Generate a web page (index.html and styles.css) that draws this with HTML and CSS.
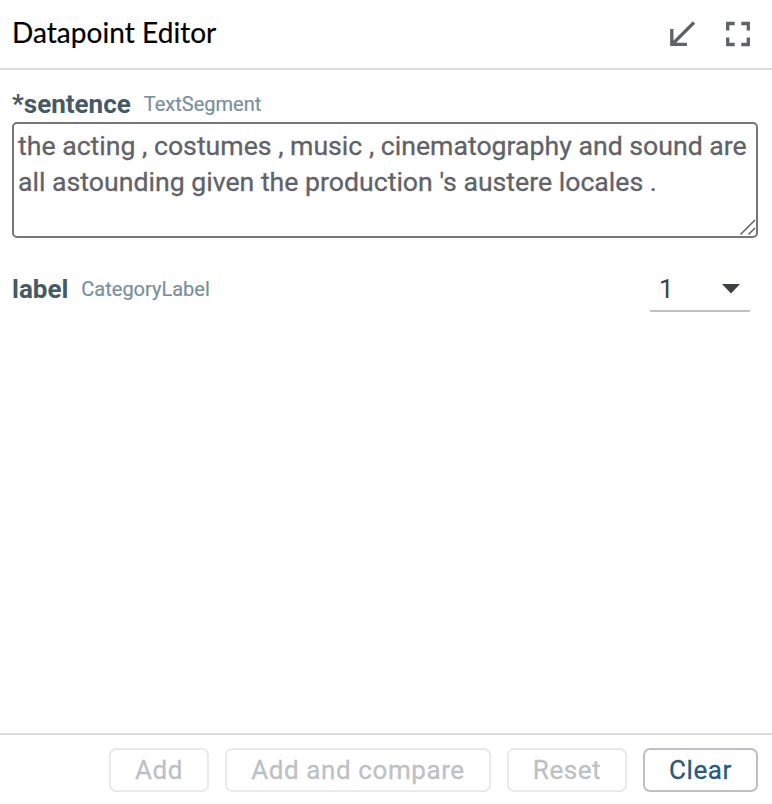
FILE: index.html
```html
<!DOCTYPE html>
<html lang="en">
<head>
<meta charset="utf-8">
<title>Datapoint Editor</title>
<link rel="stylesheet" href="styles.css">
</head>
<body>
<main class="panel">
  <header class="header">
    <h1 class="title">Datapoint Editor</h1>
    <div class="tools">
      <svg class="icon" viewBox="0 0 32 32"><path d="M28 5.500 6.500 27M5.800 12V27.300H21" fill="none" stroke="currentColor" stroke-width="3.300"/></svg>
      <svg class="icon" viewBox="0 0 32 32"><path d="M12.700 6.500H5.700V13.500M19.300 6.500h7V13.500M5.700 20.500v7H12.700M26.300 20.500v7H19.300" fill="none" stroke="currentColor" stroke-width="3.300"/></svg>
    </div>
  </header>
  <section class="content">
    <div class="field-name"><span class="name">*sentence</span><span class="type">TextSegment</span></div>
    <div class="text-wrap">
      <textarea class="text" spellcheck="false">the acting , costumes , music , cinematography and sound are all astounding given the production 's austere locales .</textarea>
      <svg class="grip" viewBox="0 0 16 16"><path d="M.5 15.500 15 1M8.500 15.500 15 9" fill="none" stroke="#555" stroke-width="1.400"/></svg>
    </div>
    <div class="row">
      <div class="field-name label-name"><span class="name">label</span><span class="type">CategoryLabel</span></div>
      <div class="select"><span>1</span><svg class="arrow" viewBox="0 0 18 10"><path d="M0 0H18L9 9.500Z" fill="currentColor"/></svg></div>
    </div>
  </section>
  <footer class="footer">
    <button class="button add" disabled>Add</button>
    <button class="button compare" disabled>Add and compare</button>
    <button class="button reset" disabled>Reset</button>
    <button class="button clear">Clear</button>
  </footer>
</main>
</body>
</html>
```
FILE: styles.css
```css
* { box-sizing: border-box; }
body { margin: 0; background: #fff; font-family: Roboto, sans-serif; }
.panel { height: 804px; display: flex; flex-direction: column; }
.header { height: 70px; padding: 0 18px 2px 12px; border-bottom: 2px solid #dadce0; display: flex; align-items: center; justify-content: space-between; }
.title { margin: 0; padding-bottom: 2px; font: 400 28px/34px Lato, sans-serif; letter-spacing: .05px; color: #000; -webkit-text-stroke: .2px #000; }
.tools { display: flex; gap: 24px; color: #5f6368; }
.icon { width: 32px; height: 32px; }
.content { flex: 1; padding: 17px 14px 0 12px; }
.field-name { height: 34px; display: flex; align-items: center; gap: 13px; }
.name { font-size: 26px; font-weight: 700; color: #455a64; }
.type { font-size: 20px; color: #78909c; -webkit-text-stroke: .2px; }
.text-wrap { position: relative; margin-top: 1px; }
.text { display: block; width: 746px; height: 116px; padding: 4px; border: 2px solid #767676; border-radius: 5px; font: 26.660px/36px Roboto, sans-serif; color: #5f6368; -webkit-text-stroke: .3px; resize: none; overflow: hidden; }
.grip { position: absolute; right: 2px; bottom: 3px; width: 16px; height: 16px; }
.row { display: flex; justify-content: space-between; margin-top: 30px; padding-right: 8px; }
.label-name { margin-top: 4px; }
.select { width: 100px; height: 44px; padding: 0 10px 0 9px; display: flex; align-items: center; justify-content: space-between; border-bottom: 2px solid #bdc1c6; font-size: 26px; color: #3c4043; }
.arrow { width: 18px; height: 10px; }
.footer { height: 71px; padding: 0 14px 0 0; border-top: 2px solid #dadce0; display: flex; align-items: center; justify-content: flex-end; gap: 16px; }
.button { height: 44px; padding: 0; border: 2px solid #e8eaed; border-radius: 7px; background: #fff; color: #bdc1c6; font: 26px Roboto, sans-serif; letter-spacing: .58px; -webkit-text-stroke: .3px; }
.add { width: 100px; }
.compare { width: 266px; }
.reset { width: 120px; }
.clear { width: 115px; border-color: #bdc1c6; color: #285a7b; }
```
